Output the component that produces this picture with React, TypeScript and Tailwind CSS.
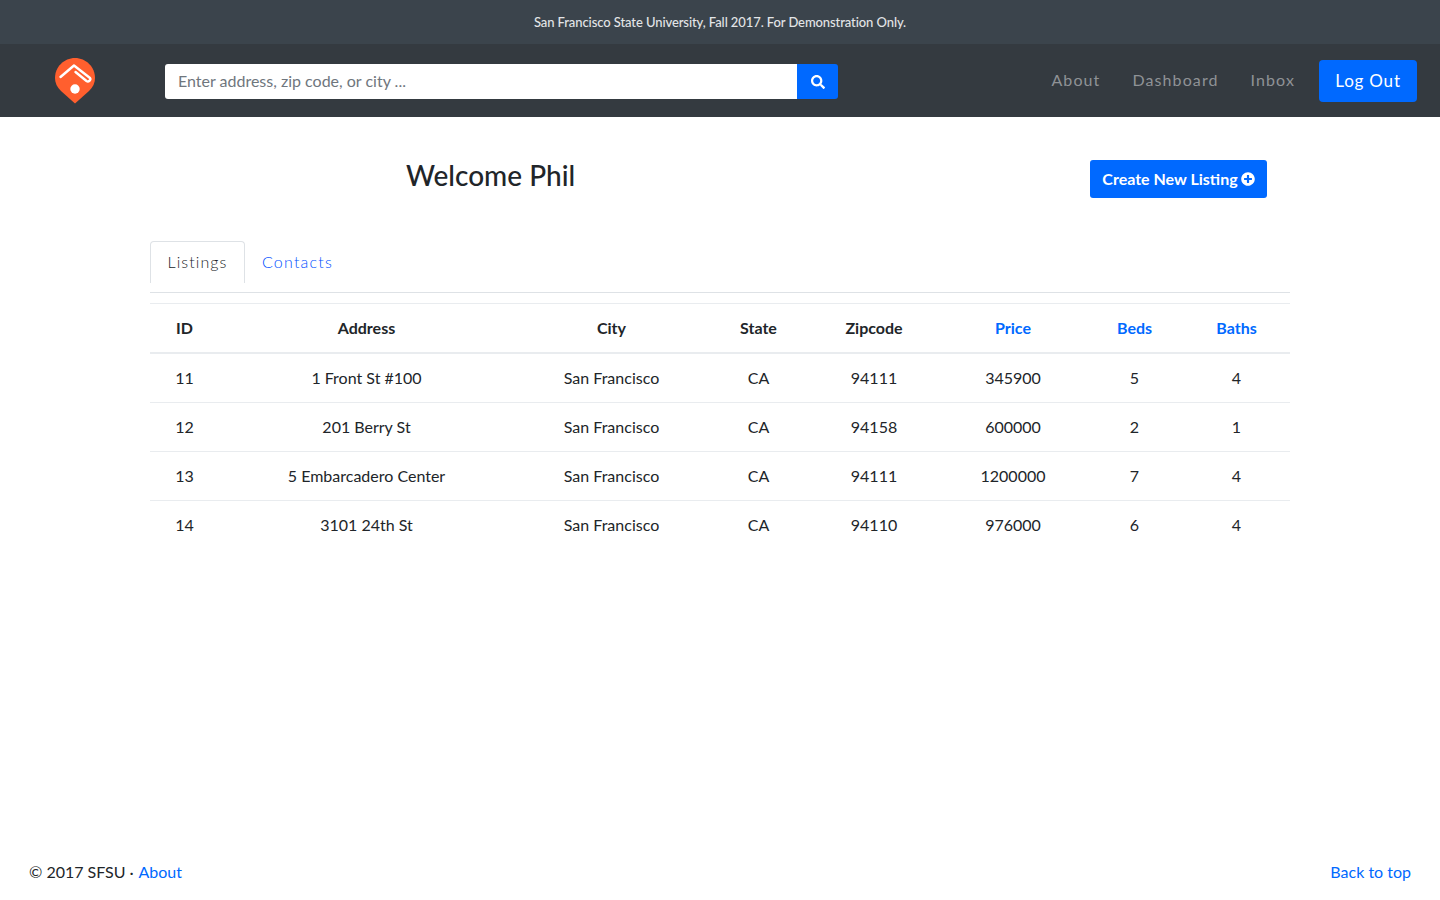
import { FaSearch, FaPlusCircle } from "react-icons/fa";

const columns = [
  { label: "ID", width: "w-[69px]" },
  { label: "Address", width: "w-[295px]" },
  { label: "City", width: "w-[195px]" },
  { label: "State", width: "w-[99px]" },
  { label: "Zipcode", width: "w-[132px]" },
  { label: "Price", width: "w-[146px]", link: true },
  { label: "Beds", width: "w-[97px]", link: true },
  { label: "Baths", width: "w-[107px]", link: true },
];

const rows = [
  ["11", "1 Front St #100", "San Francisco", "CA", "94111", "345900", "5", "4"],
  ["12", "201 Berry St", "San Francisco", "CA", "94158", "600000", "2", "1"],
  ["13", "5 Embarcadero Center", "San Francisco", "CA", "94111", "1200000", "7", "4"],
  ["14", "3101 24th St", "San Francisco", "CA", "94110", "976000", "6", "4"],
];

function Logo() {
  return (
    <svg viewBox="0 0 40 46" className="w-10 h-[46px] flex-shrink-0">
      <path
        d="M20 45.5 L6 33 C2 29 0 25 0 20 C0 9 9 0 20 0 C31 0 40 9 40 20 C40 25 38 29 34 33 Z"
        fill="#ff5f2e"
      />
      <path
        d="M5.5 19 L19 7.5 L35 20 Q36 21.5 34.5 22.8 Q33 24 31.5 23 L20.5 14"
        fill="none"
        stroke="#fff"
        strokeWidth="2.4"
        strokeLinecap="round"
        strokeLinejoin="round"
      />
      <circle cx="20" cy="31" r="4.7" fill="#fff" />
    </svg>
  );
}

export default function App() {
  return (
    <div className="min-h-screen flex flex-col bg-white text-[#212529] font-['Lato','Liberation_Sans',sans-serif] text-base">
      <div className="h-[44px] pt-px bg-[#3b444c] flex items-center justify-center text-[13px] tracking-[-0.09px] font-medium text-[#e3e5e7]">
        San Francisco State University, Fall 2017. For Demonstration Only.
      </div>

      <nav className="h-[73px] bg-[#343a40] flex items-center pl-[55px] pr-[23px]">
        <Logo />
        <div className="flex ml-[70px] mt-[2px] h-[35px] w-[673px]">
          <div className="flex-1 bg-white rounded-l-[3px] flex items-center px-[13px] pb-[2px] text-[#6f767d]">
            Enter address, zip code, or city ...
          </div>
          <div className="w-[41px] bg-[#0069ff] rounded-r-[3px] flex items-center justify-center">
            <FaSearch className="w-[14px] h-[14px] text-white" />
          </div>
        </div>
        <div className="ml-auto flex items-center text-[#8f9296] tracking-[1.1px]">
          <span className="pb-[2px]">About</span>
          <span className="ml-[32px] pb-[2px]">Dashboard</span>
          <span className="ml-[32px] pb-[2px]">Inbox</span>
          <div className="ml-[24px] w-[98px] h-[42px] pt-px bg-[#0069ff] rounded-[4px] flex items-center justify-center text-white text-[17px] tracking-[0.8px]">
            Log Out
          </div>
        </div>
      </nav>

      <main className="w-[1140px] mx-auto">
        <div className="flex items-start pt-[43px] h-[124px]">
          <h1 className="ml-[256px] -mt-px text-[28px] leading-[32px] font-medium text-[#212529]">Welcome Phil</h1>
          <div className="ml-auto mr-[23px] h-[38px] w-[177px] bg-[#0069ff] rounded-[3px] flex items-center justify-center gap-[3px] text-white font-bold">
            Create New Listing
            <FaPlusCircle className="w-[14px] h-[14px] text-white" />
          </div>
        </div>

        <div className="flex border-b border-[#dee2e6] h-[52px]">
          <div className="w-[95px] h-[42px] pb-[2px] border border-b-0 border-[#dee2e6] rounded-t-[4px] flex items-center justify-center text-[#212529] font-light tracking-[1.1px]">
            Listings
          </div>
          <div className="ml-[17px] h-[42px] flex items-center text-[#0050ff] font-light tracking-[1.2px]">Contacts</div>
        </div>

        <table className="w-full table-fixed mt-[10px] border-t border-[#e9ecef] text-center">
          <thead>
            <tr className="h-[49px] border-b-2 border-[#e9ecef]">
              {columns.map((col) => (
                <th key={col.label} className={`${col.width} font-bold ${col.link ? "text-[#0069ff]" : ""}`}>
                  {col.label}
                </th>
              ))}
            </tr>
          </thead>
          <tbody>
            {rows.map((row) => (
              <tr key={row[0]} className="h-[49px] first:h-[50px] border-b border-[#e9ecef] last:border-b-0">
                {row.map((cell, index) => (
                  <td key={index}>{cell}</td>
                ))}
              </tr>
            ))}
          </tbody>
        </table>
      </main>

      <footer className="mt-auto h-[56px] flex items-center justify-between px-[29px] text-[#212529]">
        <div>
          © 2017 SFSU · <span className="ml-[0.5px] text-[#0069ff]">About</span>
        </div>
        <div className="text-[#0069ff]">Back to top</div>
      </footer>
    </div>
  );
}
